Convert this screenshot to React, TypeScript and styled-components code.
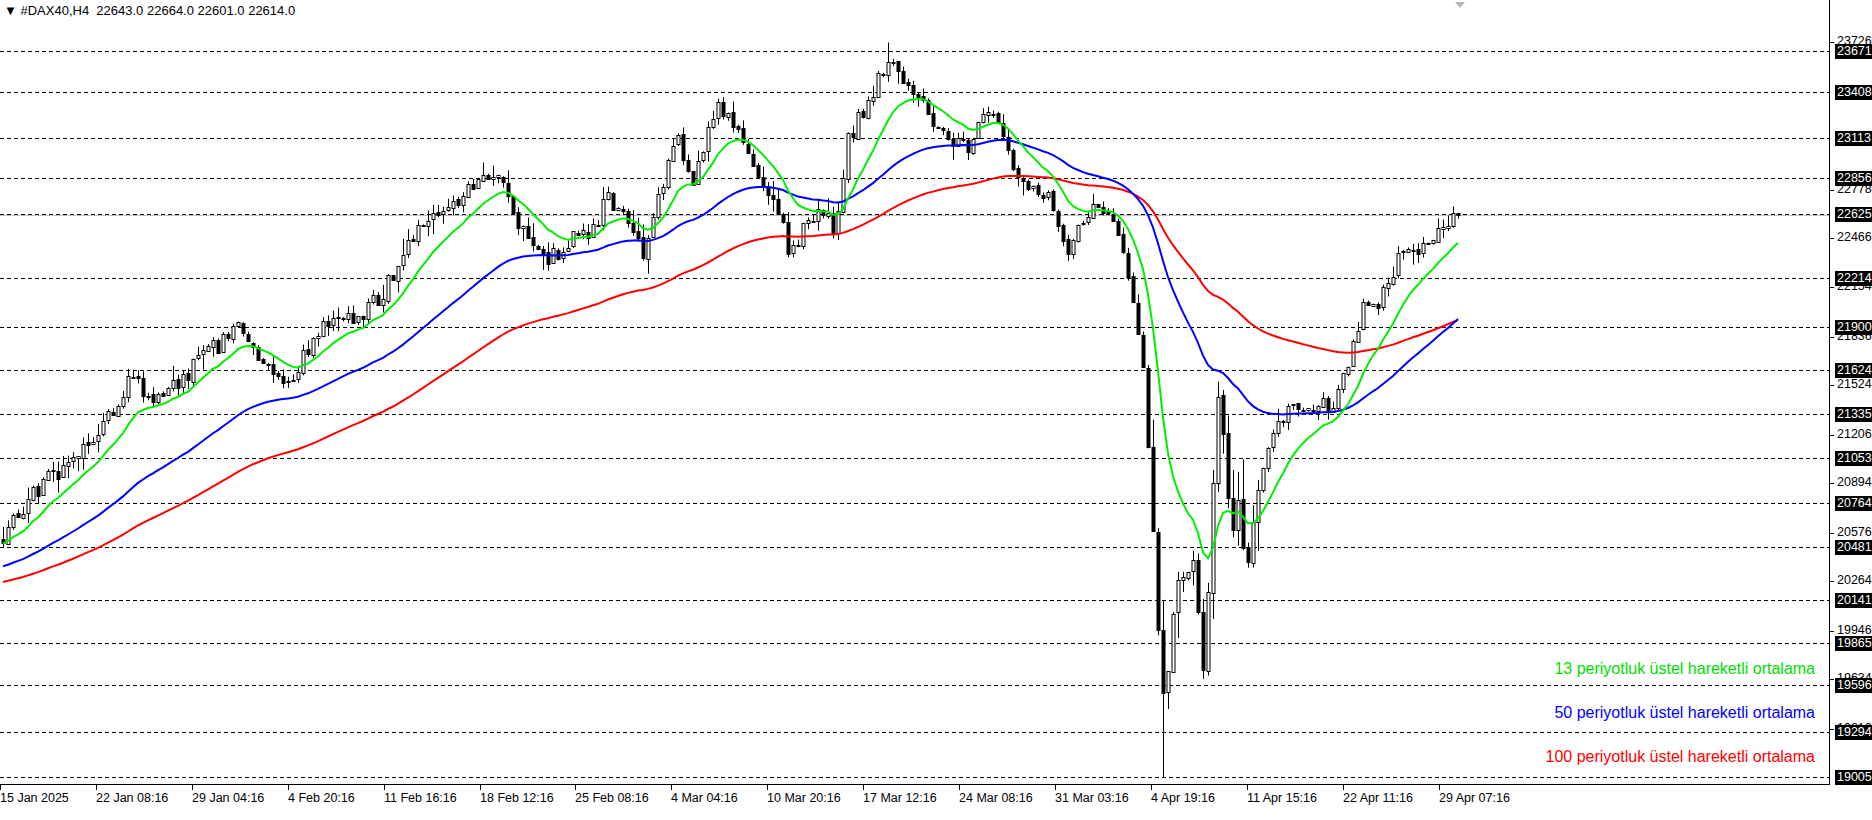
import React, { useMemo } from 'react';
import styled, { createGlobalStyle } from 'styled-components';

const GlobalStyle = createGlobalStyle`
  html, body { margin: 0; padding: 0; background: #fff; }
  body { font-family: "Liberation Sans", Arial, sans-serif; }
`;

const PLOT_W = 1829;
const PLOT_H = 784;
const TOP_P = 23671;
const PX_PER_PT = 0.1556;
const yOf = (p: number) => 51 + (TOP_P - p) * PX_PER_PT;

const levels = [23671, 23408, 23113, 22856, 22625, 22214, 21900, 21624, 21335, 21053, 20764, 20481, 20141, 19865, 19596, 19294, 19005];
const ticks = [23726, 22778, 22466, 22154, 21836, 21524, 21206, 20894, 20576, 20264, 19946, 19634, 19316];
const dates = ['15 Jan 2025', '22 Jan 08:16', '29 Jan 04:16', '4 Feb 20:16', '11 Feb 16:16', '18 Feb 12:16', '25 Feb 08:16', '4 Mar 04:16', '10 Mar 20:16', '17 Mar 12:16', '24 Mar 08:16', '31 Mar 03:16', '4 Apr 19:16', '11 Apr 15:16', '22 Apr 11:16', '29 Apr 07:16'];

// path of the close, in screenshot units (x, y) scaled to the page later
const way: [number, number][] = [
  [0, 450], [30, 410], [60, 385], [90, 350], [110, 315], [130, 340], [150, 320], [180, 290], [200, 275], [210, 295],
  [230, 320], [250, 310], [270, 265], [290, 270], [320, 245], [340, 210], [355, 180], [380, 175], [400, 150], [415, 140],
  [430, 185], [450, 205], [460, 215], [480, 200], [500, 185], [510, 165], [525, 185], [540, 210], [555, 150], [565, 110],
  [580, 150], [600, 90], [620, 115], [635, 150], [650, 165], [660, 210], [680, 180], [700, 190], [710, 120], [730, 75],
  [745, 55], [760, 70], [775, 95], [790, 110], [810, 120], [830, 90], [845, 130], [860, 150], [880, 170], [895, 220],
  [910, 175], [930, 180], [945, 230], [955, 290], [965, 420], [972, 600], [985, 500], [1000, 470], [1010, 560], [1020, 330],
  [1030, 420], [1045, 450], [1060, 380], [1080, 340], [1100, 350], [1120, 330], [1130, 300], [1140, 260], [1155, 250],
  [1170, 220], [1190, 205], [1210, 195], [1222, 178],
];
const S = 1.194;
const priceOfView = (vy: number) => TOP_P - (vy * S - 51) / PX_PER_PT;

function rng(seed: number) {
  let a = seed;
  return () => {
    a |= 0; a = (a + 0x6d2b79f5) | 0;
    let t = Math.imul(a ^ (a >>> 15), 1 | a);
    t = (t + Math.imul(t ^ (t >>> 7), 61 | t)) ^ t;
    return ((t ^ (t >>> 14)) >>> 0) / 4294967296;
  };
}

interface Candle { x: number; o: number; h: number; l: number; c: number; }

function buildData() {
  const r = rng(7);
  const pts = way.map(([x, y]) => [x * S, priceOfView(y)]);
  const interp = (x: number) => {
    for (let i = 1; i < pts.length; i++) {
      if (x <= pts[i][0]) {
        const [x0, p0] = pts[i - 1];
        const [x1, p1] = pts[i];
        return p0 + ((x - x0) / (x1 - x0)) * (p1 - p0);
      }
    }
    return pts[pts.length - 1][1];
  };
  const candles: Candle[] = [];
  let prev = interp(0);
  for (let x = 3; x <= 1460; x += 5) {
    const wild = x > 1140 && x < 1260 ? 3 : 1;
    const c = interp(x) + (r() - 0.5) * 130 * wild;
    const o = prev + (r() - 0.5) * 20;
    const h = Math.max(o, c) + r() * r() * 110 * wild;
    const l = Math.min(o, c) - r() * r() * 110 * wild;
    candles.push({ x, o, h, l, c });
    prev = c;
  }
  const spike = candles.reduce((b, k) => (Math.abs(k.x - 1161) < Math.abs(b.x - 1161) ? k : b));
  spike.l = 19005;
  const top = candles.reduce((b, k) => (Math.abs(k.x - 888) < Math.abs(b.x - 888) ? k : b));
  top.h = 23726;
  const ema = (n: number, init: number) => {
    const k = 2 / (n + 1);
    let e = init;
    return candles.map((cd) => (e = cd.c * k + e * (1 - k)));
  };
  return {
    candles,
    e13: ema(13, priceOfView(455)),
    e50: ema(50, priceOfView(475)),
    e100: ema(100, priceOfView(488)),
  };
}

const Page = styled.div`
  width: 1872px;
  height: 820px;
  display: flex;
  flex-direction: column;
  overflow: hidden;
  background: #fff;
`;

const ChartRow = styled.div`
  display: flex;
  height: ${PLOT_H + 1}px;
`;

const Plot = styled.div`
  position: relative;
  width: ${PLOT_W}px;
  height: ${PLOT_H}px;
  border-right: 1px solid #000;
  border-bottom: 1px solid #000;
`;

const Header = styled.div`
  position: absolute;
  top: 3px;
  left: 4px;
  font-size: 13px;
  color: #000;
  white-space: pre;
`;

const ShiftMark = styled.div`
  position: absolute;
  top: 2px;
  left: 1455px;
  width: 0;
  height: 0;
  border-left: 5px solid transparent;
  border-right: 5px solid transparent;
  border-top: 6px solid #b8b8b8;
`;

const LegendStack = styled.div`
  position: absolute;
  right: 14px;
  top: 660px;
  display: flex;
  flex-direction: column;
  align-items: flex-end;
  gap: 26px;
`;

const Legend = styled.div<{ $color: string }>`
  color: ${(p) => p.$color};
  font-size: 16px;
  line-height: 18px;
  white-space: nowrap;
`;

const PriceAxis = styled.div`
  position: relative;
  flex: 1;
  font-size: 12.5px;
`;

const PriceLabel = styled.div<{ $hi?: boolean }>`
  position: absolute;
  left: 5px;
  padding: 0 2px;
  height: 15px;
  line-height: 15px;
  color: ${(p) => (p.$hi ? '#fff' : '#000')};
  background: ${(p) => (p.$hi ? '#000' : 'transparent')};
  z-index: ${(p) => (p.$hi ? 2 : 1)};
`;

const Tick = styled.div`
  position: absolute;
  left: 0;
  width: 4px;
  height: 1px;
  background: #000;
`;

const TimeAxis = styled.div`
  position: relative;
  flex: 1;
  font-size: 12.5px;
`;

const TimeLabel = styled.div`
  position: absolute;
  top: 6px;
  white-space: nowrap;
  &::before {
    content: '';
    position: absolute;
    left: 0;
    top: -6px;
    width: 1px;
    height: 5px;
    background: #000;
  }
`;

const line = (vals: number[], xs: number[]) =>
  vals.map((v, i) => `${i ? 'L' : 'M'}${xs[i]},${yOf(v).toFixed(1)}`).join('');

const App: React.FC = () => {
  const { candles, e13, e50, e100 } = useMemo(buildData, []);
  const xs = candles.map((c) => c.x);

  return (
    <Page>
      <GlobalStyle />
      <ChartRow>
        <Plot>
          <svg width={PLOT_W} height={PLOT_H} style={{ display: 'block' }}>
            {levels.map((p) => (
              <line key={p} x1={0} x2={PLOT_W} y1={Math.round(yOf(p)) + 0.5} y2={Math.round(yOf(p)) + 0.5} stroke="#000" strokeDasharray="4 3" />
            ))}
            <line x1={0} x2={PLOT_W} y1={Math.round(yOf(22614)) + 0.5} y2={Math.round(yOf(22614)) + 0.5} stroke="#c0c0c0" />
            {candles.map((k, i) => {
              const up = k.c >= k.o;
              const top = Math.round(yOf(Math.max(k.o, k.c)));
              const bot = Math.max(top + 1, Math.round(yOf(Math.min(k.o, k.c))));
              return (
                <g key={i}>
                  <line x1={k.x + 0.5} x2={k.x + 0.5} y1={yOf(k.h)} y2={yOf(k.l)} stroke="#000" />
                  <rect x={k.x - 1} y={top + 0.5} width={3} height={bot - top} fill={up ? '#fff' : '#000'} stroke="#000" strokeWidth={1} />
                </g>
              );
            })}
            <path d={line(e100, xs)} fill="none" stroke="#ff0000" strokeWidth={2} />
            <path d={line(e50, xs)} fill="none" stroke="#0000ff" strokeWidth={2} />
            <path d={line(e13, xs)} fill="none" stroke="#00ee00" strokeWidth={2} />
          </svg>
          <Header>{'▼ #DAX40,H4  22643.0 22664.0 22601.0 22614.0'}</Header>
          <ShiftMark />
          <LegendStack>
            <Legend $color="#00dd00">13 periyotluk üstel hareketli ortalama</Legend>
            <Legend $color="#0000ff">50 periyotluk üstel hareketli ortalama</Legend>
            <Legend $color="#ff0000">100 periyotluk üstel hareketli ortalama</Legend>
          </LegendStack>
        </Plot>
        <PriceAxis>
          {ticks.map((p) => (
            <React.Fragment key={p}>
              <Tick style={{ top: Math.round(yOf(p)) }} />
              <PriceLabel style={{ top: Math.round(yOf(p)) - 8 }}>{p}</PriceLabel>
            </React.Fragment>
          ))}
          {levels.map((p) => (
            <PriceLabel key={p} $hi style={{ top: Math.round(yOf(p)) - 7 }}>{p}</PriceLabel>
          ))}
        </PriceAxis>
      </ChartRow>
      <TimeAxis>
        {dates.map((d, i) => (
          <TimeLabel key={d} style={{ left: Math.round(i * 95.9) }}>{d}</TimeLabel>
        ))}
      </TimeAxis>
    </Page>
  );
};

export default App;
